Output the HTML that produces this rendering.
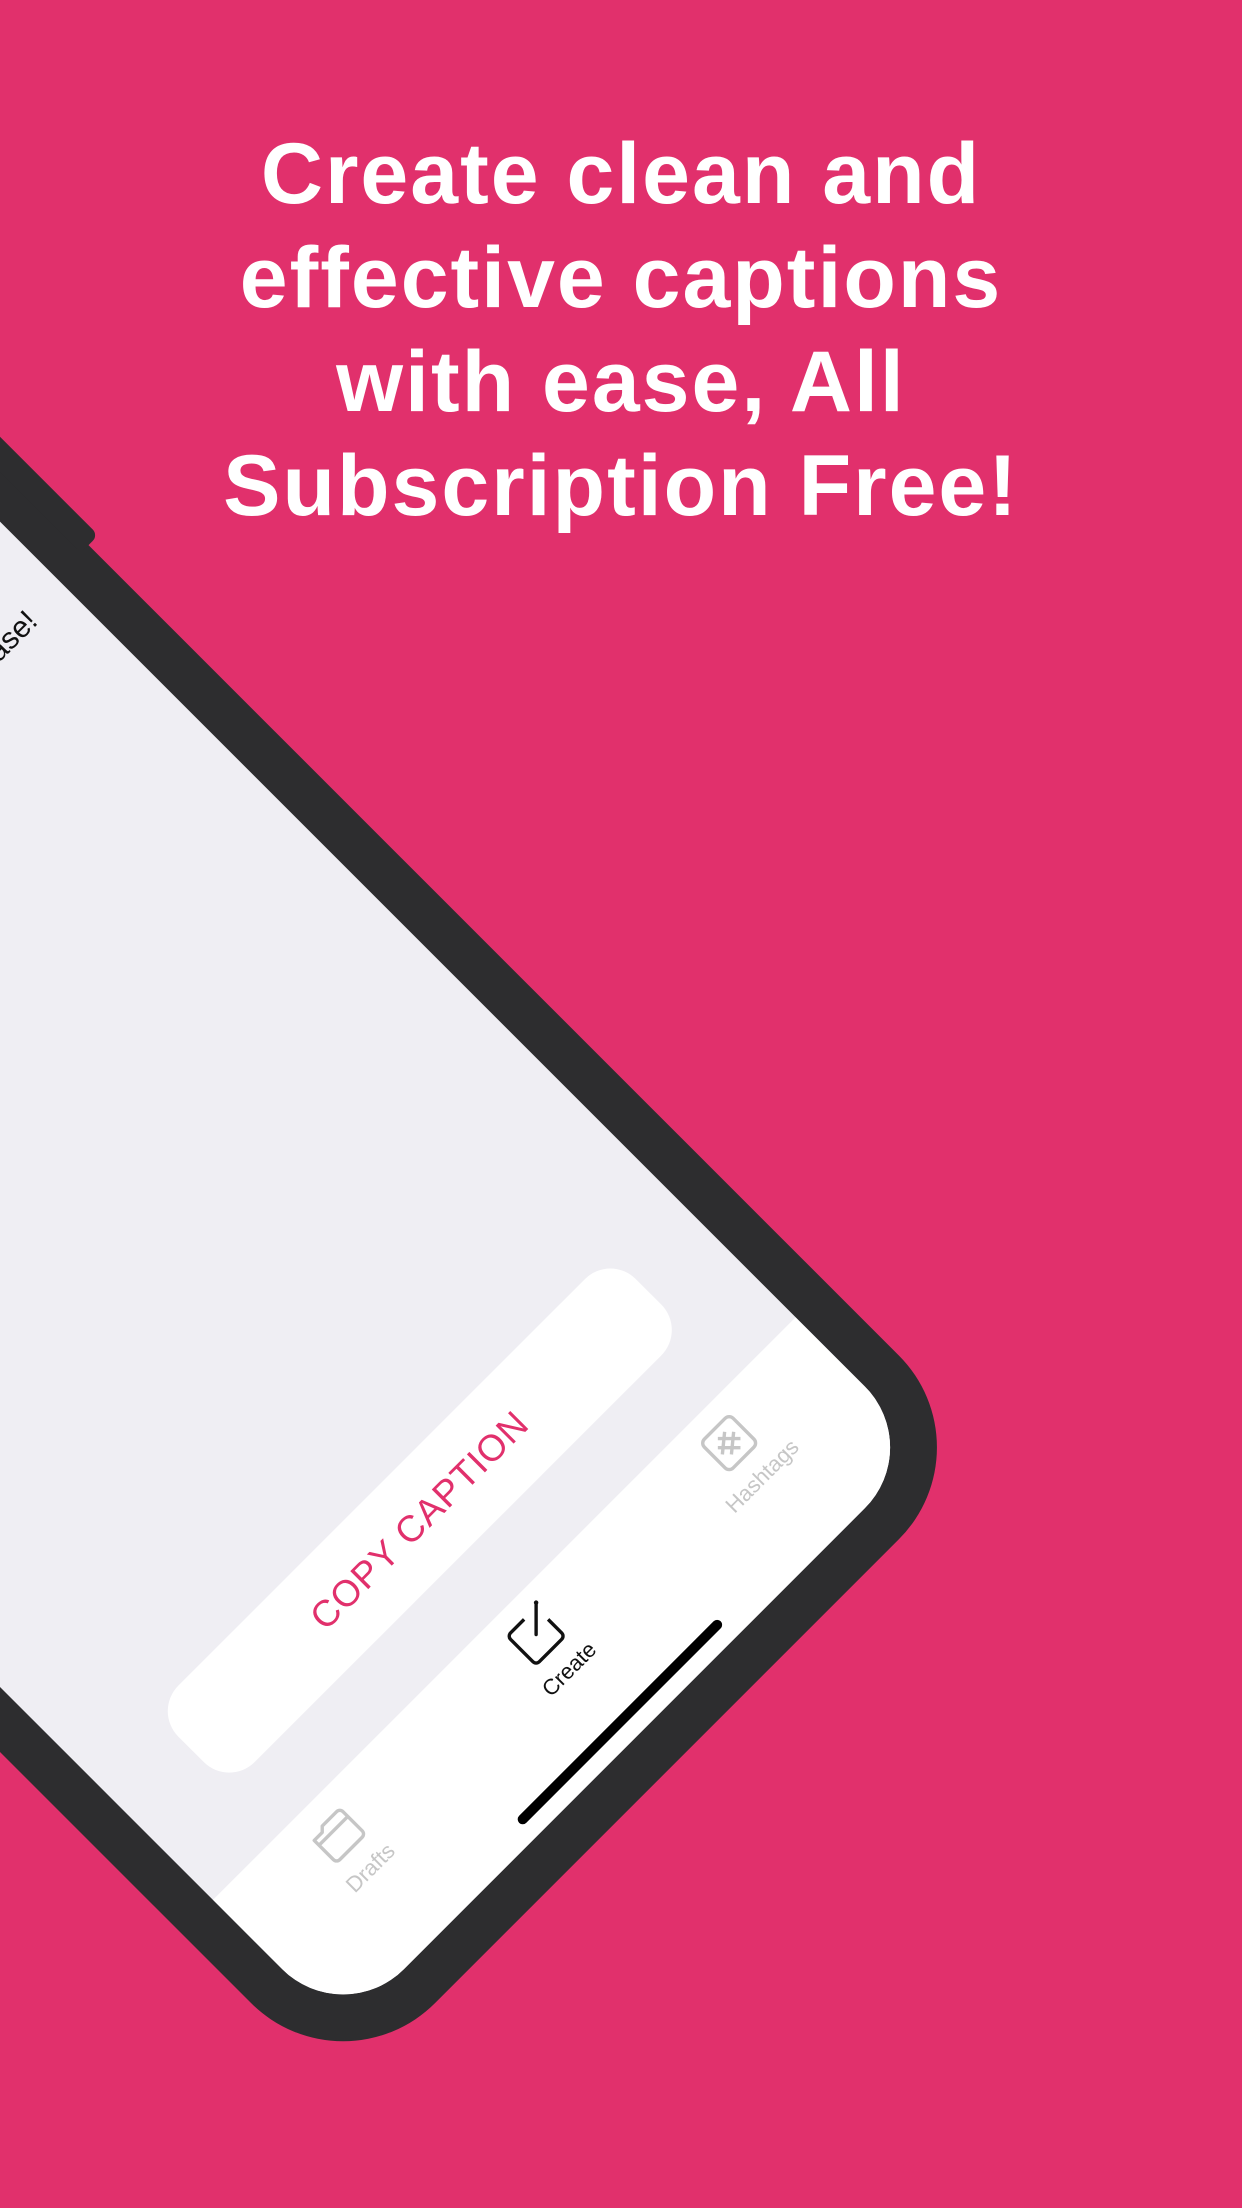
<!DOCTYPE html>
<html><head><meta charset="utf-8"><style>
html,body{margin:0;padding:0}
body{width:1242px;height:2208px;overflow:hidden;background:#e1306c;position:relative;font-family:"Liberation Sans",sans-serif}
.h{position:absolute;left:0;top:0;width:1242px;text-align:center;color:#fff;font-weight:bold;font-size:86px;line-height:104px;padding-top:122px;letter-spacing:2px}
.phone{position:absolute;left:-1057.5px;top:694.5px;width:916px;height:1980px;transform-origin:0 0;transform:rotate(-45deg);background:#2d2d2f;border-radius:130px}
.btn-side{position:absolute;left:905px;top:300px;width:25px;height:404px;background:#2d2d2f;border-radius:8px}
.screen{position:absolute;left:46px;top:46px;width:824px;height:1888px;background:#efeef3;border-radius:86px;overflow:hidden}
.txt{position:absolute;right:44px;top:652px;font-size:30px;color:#111;white-space:nowrap}
.copy{position:absolute;left:91px;top:1528px;width:647px;height:108px;background:#fff;border-radius:36px;color:#e1306c;font-size:37px;letter-spacing:1px;text-align:center;line-height:108px}
.tab{position:absolute;left:0;top:1704px;width:824px;height:184px;background:#fff}
.item{position:absolute;width:200px;text-align:center;font-size:22px}
.home{position:absolute;left:271px;top:1861px;width:285px;height:10px;border-radius:5px;background:#000}
</style></head><body>
<div class="h">Create clean and<br>effective captions<br>with ease, All<br>Subscription Free!</div>
<div class="phone">
<div class="btn-side"></div>
<div class="screen">
<div class="txt">Create clean and effective captions with ease!</div>
<div class="copy">COPY CAPTION</div>
<div class="tab"></div>
<div class="item" style="left:34px;top:1720px;color:#c6c6c6">
<svg width="52" height="52" viewBox="0 0 46 46"><path d="M5 12 h10 l4 -4 h18 a4 4 0 0 1 4 4 v24 a4 4 0 0 1 -4 4 h-28 a4 4 0 0 1 -4 -4 z M5 18 h36" fill="none" stroke="#c6c6c6" stroke-width="3" stroke-linejoin="round"/></svg>
<div style="margin-top:2px">Drafts</div></div>
<div class="item" style="left:315px;top:1720px;color:#111">
<svg width="52" height="52" viewBox="0 0 46 46"><path d="M26 5 h-17 a4 4 0 0 0 -4 4 v28 a4 4 0 0 0 4 4 h28 a4 4 0 0 0 4 -4 v-17" fill="none" stroke="#111" stroke-width="3" stroke-linejoin="round"/><path d="M43 3 L24 22" stroke="#111" stroke-width="3" stroke-linecap="round"/><circle cx="44" cy="2" r="2" fill="#111"/></svg>
<div style="margin-top:2px">Create</div></div>
<div class="item" style="left:588px;top:1720px;color:#c6c6c6">
<svg width="52" height="52" viewBox="0 0 46 46"><rect x="5" y="5" width="36" height="36" rx="5" fill="none" stroke="#c6c6c6" stroke-width="3"/><g transform="rotate(45 23 23)" stroke="#c6c6c6" stroke-width="3"><path d="M19 13 l-2 20 M27 13 l-2 20 M13 19 h20 M13 27 h20"/></g></svg>
<div style="margin-top:2px">Hashtags</div></div>
<div class="home"></div>
</div>
</div>
</body></html>
